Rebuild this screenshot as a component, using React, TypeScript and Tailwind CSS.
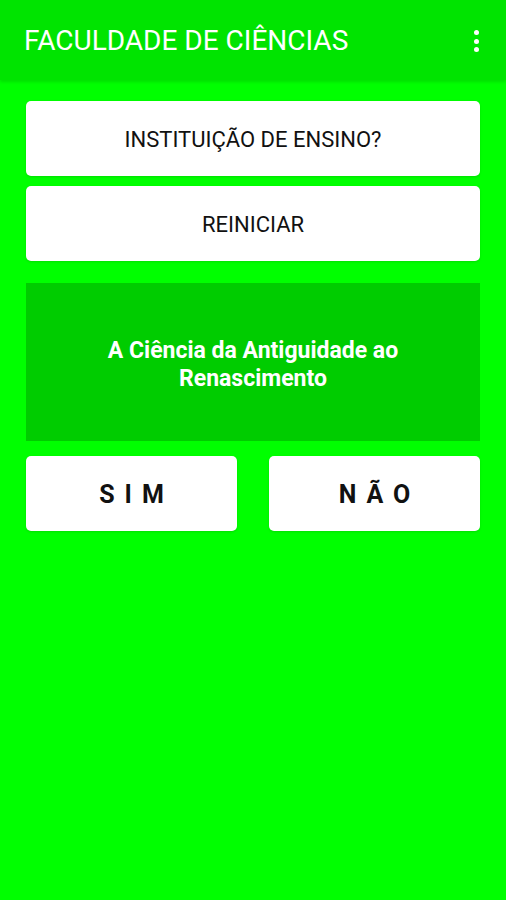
import type { FC } from 'react';

const App: FC = () => {
  return (
    <div className="min-h-[900px] w-full bg-[#00ff00]" style={{ fontFamily: 'Roboto, "Noto Sans", sans-serif' }}>
      {/* App bar */}
      <header className="h-[80px] bg-[#00e400] flex items-center justify-between pl-6 pr-[27px] pt-[2px] shadow-[0_2px_3px_rgba(0,0,0,0.12)]">
        <h1 className="text-white text-[28px] leading-none font-normal">FACULDADE DE CIÊNCIAS</h1>
        <div className="flex flex-col items-center gap-[3.5px]">
          <span className="w-[5px] h-[5px] rounded-full bg-white" />
          <span className="w-[5px] h-[5px] rounded-full bg-white" />
          <span className="w-[5px] h-[5px] rounded-full bg-white" />
        </div>
      </header>

      <main className="px-[26px] pt-[21px] flex flex-col">
        <button className="h-[75px] pt-[2px] bg-white rounded-[5px] text-[#111] text-[22px] shadow-sm">
          INSTITUIÇÃO DE ENSINO?
        </button>
        <button className="h-[75px] pt-[2px] mt-[10px] bg-white rounded-[5px] text-[#111] text-[22px] shadow-sm">
          REINICIAR
        </button>

        <div className="h-[158px] mt-[22px] pt-[6px] bg-[#00cc00] flex items-center justify-center px-8">
          <p className="text-white text-[23px] font-bold leading-[28px] text-center">
            A Ciência da Antiguidade ao
            <br />
            Renascimento
          </p>
        </div>

        <div className="mt-[15px] grid grid-cols-2 gap-8">
          <button className="h-[75px] pt-[2px] bg-white rounded-[5px] text-[#111] text-[25px] font-bold tracking-[0.4em] pl-[0.4em] shadow-sm">
            SIM
          </button>
          <button className="h-[75px] pt-[2px] bg-white rounded-[5px] text-[#111] text-[25px] font-bold tracking-[0.4em] pl-[0.4em] shadow-sm">
            NÃO
          </button>
        </div>
      </main>
    </div>
  );
};

export default App;
